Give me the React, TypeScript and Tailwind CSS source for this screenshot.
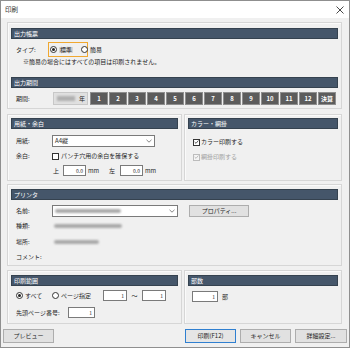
import React from "react";

const months = ["1", "2", "3", "4", "5", "6", "7", "8", "9", "10", "11", "12", "決算"];

function Header({ title }: { title: string }) {
  return (
    <div className="h-[11px] bg-[#45566a] border border-[#35424f] text-white text-[6px] leading-none flex items-center px-[2px]">
      {title}
    </div>
  );
}

function Radio({ checked }: { checked?: boolean }) {
  return (
    <span className="w-[7px] h-[7px] rounded-full border border-[#333] bg-white flex items-center justify-center shrink-0">
      {checked && <span className="w-[3px] h-[3px] rounded-full bg-[#222]" />}
    </span>
  );
}

function Check({ checked, disabled }: { checked?: boolean; disabled?: boolean }) {
  return (
    <span
      className={
        disabled
          ? "w-[7px] h-[7px] border border-[#bcbcbc] bg-[#f4f4f4] flex items-center justify-center shrink-0"
          : "w-[7px] h-[7px] border border-[#333] bg-white flex items-center justify-center shrink-0"
      }
    >
      {checked && (
        <svg width="6" height="6" viewBox="0 0 6 6">
          <path d="M0.8 3 L2.4 4.6 L5.3 1.2" fill="none" stroke={disabled ? "#a8a8a8" : "#222"} strokeWidth="0.9" />
        </svg>
      )}
    </span>
  );
}

function Box({ value, w }: { value: string; w: string }) {
  return (
    <div className={`${w} h-[11px] bg-white border border-[#7a7a7a] flex items-center justify-end pr-[2px] text-[5px] leading-none shrink-0`}>
      {value}
    </div>
  );
}

function Blur({ w }: { w: string }) {
  return <div className={`${w} h-[4px] bg-[#a9a9a9] blur-[1px] rounded-sm`} />;
}

function Btn({ label, w, focus }: { label: string; w: string; focus?: boolean }) {
  return (
    <div
      className={
        focus
          ? `${w} h-[14px] bg-[#e5e5e5] border border-[#2f7fd0] flex items-center justify-center text-[6px] leading-none`
          : `${w} h-[14px] bg-[#e1e1e1] border border-[#adadad] flex items-center justify-center text-[6px] leading-none`
      }
    >
      {label}
    </div>
  );
}

const panel = "border border-[#d6d6d6] shadow-[inset_1px_1px_0_#fafafa] px-[3px]";

export default function App() {
  return (
    <div className="w-[350px] h-[348px] border border-[#8f8f8f] bg-[#f0f0f0] text-[#1e1e1e] font-['Noto_Sans_CJK_JP','Noto_Sans',sans-serif] overflow-hidden">
      {/* タイトルバー */}
      <div className="h-[17px] bg-white flex items-center justify-between pl-[4px] pr-[5px]">
        <span className="text-[6.5px] leading-none text-[#333]">印刷</span>
        <svg width="8" height="8" viewBox="0 0 8 8">
          <path d="M0.5 0.5 L7.5 7.5 M7.5 0.5 L0.5 7.5" stroke="#333" strokeWidth="0.9" />
        </svg>
      </div>

      <div className="pl-[6px] pr-[7px] pt-[4px]">
        {/* 出力帳票・出力期間 */}
        <div className={`${panel} pt-[5px] pb-[3px]`}>
          <Header title="出力帳票" />
          <div className="mt-[3px] h-[15px] flex items-center text-[6px] leading-none">
            <span className="w-[37px] pl-[5px]">タイプ:</span>
            <div className="h-[15px] w-[40px] border border-[#f0a830] flex items-center gap-[2px] pl-[1px]">
              <Radio checked />
              <span className="bg-[#d6d6d6] px-[1px]">標準</span>
            </div>
            <div className="flex items-center gap-[2px] ml-[-7px]">
              <Radio />
              <span>簡易</span>
            </div>
          </div>
          <div className="mt-[1px] h-[8px] flex items-center pl-[12px] text-[6px] leading-none">
            ※簡易の場合にはすべての項目は印刷されません。
          </div>
          <div className="mt-[11px]">
            <Header title="出力期間" />
          </div>
          <div className="mt-[4px] h-[13px] flex items-center text-[6px] leading-none">
            <span className="w-[42px] pl-[5px]">期間:</span>
            <div className="w-[35px] h-[13px] bg-[#e0e0e0] border border-[#c8c8c8] flex items-center pl-[3px] gap-[4px]">
              <div className="w-[18px] h-[5px] bg-[#b0b0b0] blur-[1px]" />
              <span>年</span>
            </div>
            <div className="flex gap-[1px] ml-[2px]">
              {months.map((m) => (
                <div
                  key={m}
                  className="w-[18px] h-[13px] bg-[#5c5c5c] border border-[#8e8e8e] text-white font-bold text-[6px] leading-none flex items-center justify-center"
                >
                  {m}
                </div>
              ))}
            </div>
          </div>
        </div>

        {/* 用紙・余白 / カラー・網掛 */}
        <div className="mt-[5px] flex gap-[2px]">
          <div className={`${panel} w-[175px] pt-[3px] pb-[4px]`}>
            <Header title="用紙・余白" />
            <div className="mt-[6px] h-[12px] flex items-center text-[6px] leading-none">
              <span className="w-[41px] pl-[5px]">用紙:</span>
              <div className="w-[103px] h-[12px] bg-white border border-[#7a7a7a] flex items-center justify-between px-[2px]">
                <span>A4縦</span>
                <svg width="6" height="4" viewBox="0 0 6 4">
                  <path d="M0.5 0.8 L3 3.2 L5.5 0.8" fill="none" stroke="#555" strokeWidth="0.7" />
                </svg>
              </div>
            </div>
            <div className="mt-[5px] h-[8px] flex items-center text-[6px] leading-none">
              <span className="w-[41px] pl-[5px]">余白:</span>
              <Check />
              <span className="ml-[2px]">パンチ穴用の余白を確保する</span>
            </div>
            <div className="mt-[5px] h-[11px] flex items-center text-[6px] leading-none">
              <span className="w-[52px] shrink-0 pl-[42px]">上</span>
              <Box value="0.0" w="w-[23px]" />
              <span className="ml-[2px] w-[21px] shrink-0">mm</span>
              <span className="w-[11px] shrink-0">左</span>
              <Box value="0.0" w="w-[23px]" />
              <span className="ml-[2px]">mm</span>
            </div>
          </div>
          <div className={`${panel} flex-1 pt-[3px]`}>
            <Header title="カラー・網掛" />
            <div className="mt-[9px] h-[8px] flex items-center text-[6px] leading-none pl-[5px]">
              <Check checked />
              <span className="ml-[1px]">カラー印刷する</span>
            </div>
            <div className="mt-[7px] h-[8px] flex items-center text-[6px] leading-none pl-[5px] text-[#a0a0a0]">
              <Check checked disabled />
              <span className="ml-[1px]">網掛印刷する</span>
            </div>
          </div>
        </div>

        {/* プリンタ */}
        <div className={`${panel} mt-[3px] pt-[4px] pb-[4px]`}>
          <Header title="プリンタ" />
          <div className="mt-[5px] h-[12px] flex items-center text-[6px] leading-none">
            <span className="w-[41px] pl-[5px]">名前:</span>
            <div className="w-[126px] h-[12px] bg-white border border-[#7a7a7a] flex items-center justify-between px-[2px]">
              <Blur w="w-[66px]" />
              <svg width="6" height="4" viewBox="0 0 6 4">
                <path d="M0.5 0.8 L3 3.2 L5.5 0.8" fill="none" stroke="#555" strokeWidth="0.7" />
              </svg>
            </div>
            <div className="ml-[11px] w-[60px] h-[12px] bg-[#e1e1e1] border border-[#adadad] flex items-center justify-center text-[6px]">
              プロパティ...
            </div>
          </div>
          <div className="mt-[5px] h-[8px] flex items-center text-[6px] leading-none">
            <span className="w-[43px] pl-[5px]">種類:</span>
            <Blur w="w-[68px]" />
          </div>
          <div className="mt-[8px] h-[8px] flex items-center text-[6px] leading-none">
            <span className="w-[43px] pl-[5px]">場所:</span>
            <Blur w="w-[45px]" />
          </div>
          <div className="mt-[7px] h-[8px] flex items-center text-[6px] leading-none">
            <span className="pl-[5px]">コメント:</span>
          </div>
        </div>

        {/* 印刷範囲 / 部数 */}
        <div className="mt-[4px] flex gap-[2px]">
          <div className={`${panel} w-[175px] pt-[4px] pb-[5px]`}>
            <Header title="印刷範囲" />
            <div className="mt-[4px] h-[11px] flex items-center text-[6px] leading-none pl-[5px]">
              <Radio checked />
              <span className="ml-[2px] w-[27px]">すべて</span>
              <Radio />
              <span className="ml-[2px] w-[42px]">ページ指定</span>
              <Box value="1" w="w-[24px]" />
              <span className="w-[15px] text-center">〜</span>
              <Box value="1" w="w-[24px]" />
            </div>
            <div className="mt-[6px] h-[11px] flex items-center text-[6px] leading-none">
              <span className="w-[57px] pl-[5px]">先頭ページ番号:</span>
              <Box value="1" w="w-[27px]" />
            </div>
          </div>
          <div className={`${panel} flex-1 pt-[4px]`}>
            <Header title="部数" />
            <div className="mt-[5px] h-[11px] flex items-center text-[6px] leading-none pl-[4px]">
              <Box value="1" w="w-[26px]" />
              <span className="ml-[4px]">部</span>
            </div>
          </div>
        </div>
      </div>

      {/* ボタン */}
      <div className="mt-[5px] flex items-center pl-[2px] pr-[2px]">
        <Btn label="プレビュー" w="w-[51px]" />
        <div className="flex-1" />
        <div className="flex gap-[4px]">
          <Btn label="印刷(F12)" w="w-[51px]" focus />
          <Btn label="キャンセル" w="w-[51px]" />
          <Btn label="詳細設定..." w="w-[52px]" />
        </div>
      </div>
    </div>
  );
}
